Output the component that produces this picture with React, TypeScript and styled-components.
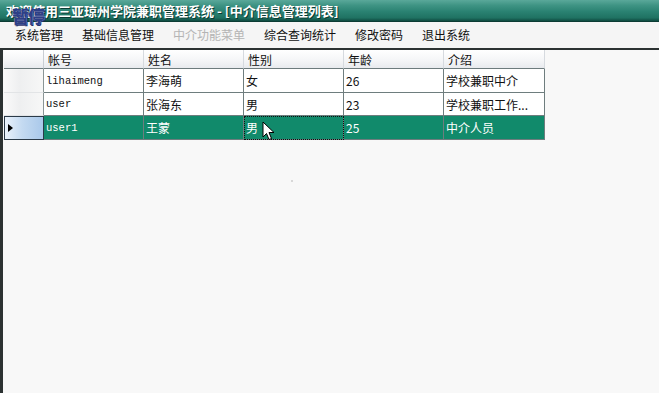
import React from "react";
import styled, { createGlobalStyle } from "styled-components";

const Global = createGlobalStyle`
  html, body { margin: 0; padding: 0; background: #f8f8f8; }
  body { font-family: "Noto Sans CJK SC", "Liberation Sans", sans-serif; }
`;

const Screen = styled.div`
  position: relative;
  width: 659px;
  height: 393px;
  display: flex;
  flex-direction: column;
  background: #f8f8f8;
  overflow: hidden;
`;

const TitleBar = styled.div`
  height: 21px;
  flex: none;
  display: flex;
  align-items: center;
  padding-left: 6px;
  background: linear-gradient(
    to bottom,
    #5aa89a 0%,
    #3f9484 25%,
    #2a8272 55%,
    #1f7262 85%,
    #0f4a40 100%
  );
  border-bottom: 1px solid #0c3c34;
`;

const TitleText = styled.span`
  color: #ffffff;
  font-size: 13px;
  font-weight: bold;
  line-height: 1;
  text-shadow: 1px 1px 0 #0a3a32;
  white-space: nowrap;
`;

const PauseMark = styled.span`
  position: absolute;
  left: 12px;
  top: 7px;
  font-size: 17px;
  font-weight: 900;
  line-height: 17px;
  color: #2e3f86;
  text-shadow: 0 0 1px #c8d0f0, 1px 1px 0 #1b2660;
  letter-spacing: -1px;
`;

const MenuBar = styled.div`
  height: 26px;
  flex: none;
  display: flex;
  align-items: center;
  padding-left: 5.5px;
  background: #f5f5f5;
`;

const MenuItem = styled.span<{ $disabled?: boolean }>`
  padding: 0 9.5px;
  font-size: 12px;
  line-height: 16px;
  color: ${(p) => (p.$disabled ? "#b4b4b4" : "#111111")};
  white-space: nowrap;
`;

const GridArea = styled.div`
  flex: 1;
  border-top: 2px solid #2c3232;
  border-left: 3px solid #2c3232;
  background: #f8f8f8;
  padding-left: 1px;
`;

const Grid = styled.div`
  display: grid;
  grid-template-columns: 40px 100px 100px 100px 100px 101px;
  grid-template-rows: 19px 24px 23px 24px;
  width: 541px;
`;

const HeadCell = styled.div<{ $corner?: boolean }>`
  display: flex;
  align-items: center;
  padding-left: 4px;
  font-size: 12px;
  color: #111;
  background: linear-gradient(to bottom, #ffffff 0%, #f4f5f7 60%, #e8eaee 100%);
  border-right: 1px solid ${(p) => (p.$corner ? "#c9ced4" : "#d6dadf")};
  border-bottom: 1px solid #6d7b7d;
  box-sizing: border-box;
`;

const RowHead = styled.div<{ $selected?: boolean }>`
  display: flex;
  align-items: center;
  padding-left: 3px;
  box-sizing: border-box;
  border-bottom: 1px solid ${(p) => (p.$selected ? "#2b3a48" : "#e2e4e6")};
  border-top: ${(p) => (p.$selected ? "1px solid #2b3a48" : "none")};
  border-right: 1px solid ${(p) => (p.$selected ? "#2b3a48" : "#8a9596")};
  border-left: ${(p) => (p.$selected ? "1px solid #2b3a48" : "none")};
  background: ${(p) =>
    p.$selected
      ? "linear-gradient(to right, #eaf2fb 0%, #c4daf1 45%, #a9c8ea 100%)"
      : "linear-gradient(to right, #fafafa 0%, #eeeff0 40%, #f7f7f7 100%)"};
`;

const Arrow = styled.span`
  width: 0;
  height: 0;
  border-top: 4.5px solid transparent;
  border-bottom: 4.5px solid transparent;
  border-left: 5px solid #000;
`;

const Cell = styled.div<{ $selected?: boolean; $mono?: boolean; $focus?: boolean }>`
  display: flex;
  align-items: center;
  padding-left: 2px;
  box-sizing: border-box;
  white-space: nowrap;
  overflow: hidden;
  font-family: ${(p) =>
    p.$mono
      ? '"Liberation Mono", "DejaVu Sans Mono", monospace'
      : '"Noto Sans CJK SC", "Liberation Sans", sans-serif'};
  font-size: ${(p) => (p.$mono ? "10.5px" : "12px")};
  color: ${(p) => (p.$selected ? "#ffffff" : "#111111")};
  background: ${(p) => (p.$selected ? "#118a6b" : "#ffffff")};
  border-right: 1px solid #6e7d7e;
  border-bottom: 1px solid #6e7d7e;
  outline: ${(p) => (p.$focus ? "1px dotted #101010" : "none")};
  outline-offset: -1px;
`;

const Cursor = styled.svg`
  position: absolute;
  left: 262px;
  top: 121px;
`;

const Dot = styled.span`
  position: absolute;
  left: 291px;
  top: 180px;
  width: 2px;
  height: 2px;
  background: #d8d8d8;
`;

type Row = { id: string; name: string; sex: string; age: string; intro: string };

const rows: Row[] = [
  { id: "lihaimeng", name: "李海萌", sex: "女", age: "26", intro: "学校兼职中介" },
  { id: "user", name: "张海东", sex: "男", age: "23", intro: "学校兼职工作..." },
  { id: "user1", name: "王蒙", sex: "男", age: "25", intro: "中介人员" },
];

const headers = ["帐号", "姓名", "性别", "年龄", "介绍"];
const menus = ["系统管理", "基础信息管理", "中介功能菜单", "综合查询统计", "修改密码", "退出系统"];

export default function App() {
  return (
    <Screen>
      <Global />
      <TitleBar>
        <TitleText>欢迎使用三亚琼州学院兼职管理系统 - [中介信息管理列表]</TitleText>
      </TitleBar>
      <PauseMark>暂停</PauseMark>
      <MenuBar>
        {menus.map((m) => (
          <MenuItem key={m} $disabled={m === "中介功能菜单"}>
            {m}
          </MenuItem>
        ))}
      </MenuBar>
      <GridArea>
        <Grid>
          <HeadCell $corner />
          {headers.map((h) => (
            <HeadCell key={h}>{h}</HeadCell>
          ))}
          {rows.map((r, i) => {
            const sel = i === rows.length - 1;
            return (
              <React.Fragment key={r.id}>
                <RowHead $selected={sel}>{sel && <Arrow />}</RowHead>
                <Cell $selected={sel} $mono>{r.id}</Cell>
                <Cell $selected={sel}>{r.name}</Cell>
                <Cell $selected={sel} $focus={sel}>{r.sex}</Cell>
                <Cell $selected={sel}>{r.age}</Cell>
                <Cell $selected={sel}>{r.intro}</Cell>
              </React.Fragment>
            );
          })}
        </Grid>
      </GridArea>
      <Dot />
      <Cursor width="13" height="20" viewBox="0 0 13 20">
        <path
          d="M1 1 L1 16 L4.5 12.5 L7 18.5 L9.5 17.5 L7 11.5 L12 11.5 Z"
          fill="#ffffff"
          stroke="#000000"
          strokeWidth="1"
          strokeLinejoin="miter"
        />
      </Cursor>
    </Screen>
  );
}
